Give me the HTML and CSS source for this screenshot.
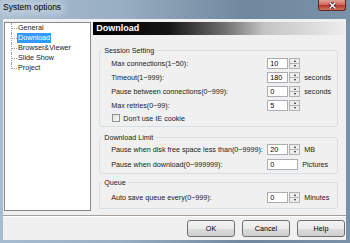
FILE: index.html
```html
<!DOCTYPE html>
<html lang="en">
<head>
    <meta charset="UTF-8">
    <title>System options</title>
    <link rel="stylesheet" href="styles.css">
</head>
<body>
    <div class="window">
        <div class="titlebar">
            <span class="title">System options</span>
            <span class="close">
                <svg width="9" height="7" viewBox="0 0 9 7">
                    <path d="M1.5 0.5 L7.5 6.5 M7.5 0.5 L1.5 6.5" stroke="#3b1410" stroke-width="3"/>
                    <path d="M1.5 0.5 L7.5 6.5 M7.5 0.5 L1.5 6.5" stroke="#fff" stroke-width="1.5"/>
                </svg>
            </span>
        </div>

        <div class="client">
            <div class="main">
                <!-- Options tree -->
                <ul class="tree">
                    <li><span class="branch"></span><span class="node">General</span></li>
                    <li><span class="branch"></span><span class="node selected">Download</span></li>
                    <li><span class="branch"></span><span class="node">Browser&amp;Viewer</span></li>
                    <li><span class="branch"></span><span class="node">Slide Show</span></li>
                    <li><span class="branch"></span><span class="node">Project</span></li>
                </ul>

                <div class="panel">
                    <div class="page-title">Download</div>

                    <fieldset class="group session">
                        <legend>Session Setting</legend>
                        <div class="row">
                            <label>Max connections(1~50):</label>
                            <input class="num" type="text" value="10">
                            <span class="spin"><span class="up"></span><span class="down"></span></span>
                        </div>
                        <div class="row">
                            <label>Timeout(1~999):</label>
                            <input class="num" type="text" value="180">
                            <span class="spin"><span class="up"></span><span class="down"></span></span>
                            <span class="unit">seconds</span>
                        </div>
                        <div class="row">
                            <label>Pause between connections(0~999):</label>
                            <input class="num" type="text" value="0">
                            <span class="spin"><span class="up"></span><span class="down"></span></span>
                            <span class="unit">seconds</span>
                        </div>
                        <div class="row">
                            <label>Max retries(0~99):</label>
                            <input class="num" type="text" value="5">
                            <span class="spin"><span class="up"></span><span class="down"></span></span>
                        </div>
                        <div class="check-row">
                            <span class="checkbox"></span>Don't use IE cookie
                        </div>
                    </fieldset>

                    <fieldset class="group limit">
                        <legend>Download Limit</legend>
                        <div class="row">
                            <label>Pause when disk free space less than(0~9999):</label>
                            <input class="num" type="text" value="20">
                            <span class="spin"><span class="up"></span><span class="down"></span></span>
                            <span class="unit">MB</span>
                        </div>
                        <div class="row">
                            <label>Pause when download(0~999999):</label>
                            <input class="num wide" type="text" value="0">
                            <span class="unit">Pictures</span>
                        </div>
                    </fieldset>

                    <fieldset class="group queue">
                        <legend>Queue</legend>
                        <div class="row">
                            <label>Auto save queue every(0~999):</label>
                            <input class="num" type="text" value="0">
                            <span class="spin"><span class="up"></span><span class="down"></span></span>
                            <span class="unit">Minutes</span>
                        </div>
                    </fieldset>
                </div>
            </div>

            <div class="separator"></div>

            <div class="buttons">
                <button class="btn">OK</button>
                <button class="btn">Cancel</button>
                <button class="btn">Help</button>
            </div>
        </div>
    </div>
</body>
</html>
```

FILE: styles.css
```css
body {
    margin: 0;
    width: 350px;
    height: 243px;
    overflow: hidden;
    font-family: "Liberation Sans", Arial, sans-serif;
    font-size: 7.2px;
    color: #1a1a1a;
}
.window {
    height: 243px;
    display: flex;
    flex-direction: column;
    background: linear-gradient(to right, #a8bccf 0%, #98aec2 35%, #6f889d 70%, #7a92a7 100%);
}
.titlebar {
    height: 19px;
    display: flex;
    align-items: flex-start;
    padding: 0 4px 0 1px;
}
.title {
    font-size: 8.5px;
    line-height: 11px;
    margin-top: 2px;
    padding: 0 2px;
    color: #000;
    border-radius: 6px;
    background: rgba(220, 230, 239, 0.35);
    box-shadow: 0 0 6px 3px rgba(220, 230, 239, 0.35);
}
.close {
    margin-left: auto;
    width: 28px;
    height: 11px;
    box-sizing: border-box;
    border: 1px solid #5d2a24;
    border-top: none;
    border-radius: 0 0 3px 3px;
    background: linear-gradient(#e3a297 0%, #cf6a5c 45%, #b73a2c 55%, #d0735e 100%);
    display: flex;
    align-items: center;
    justify-content: center;
}
.close svg {
    display: block;
}
.client {
    flex: 1;
    margin: 0 4px 3px 3px;
    background: #f0f0f0;
    display: flex;
    flex-direction: column;
}
.main {
    display: flex;
    padding: 3px 1px 0 1px;
}

/* tree */
.tree {
    width: 92px;
    height: 189px;
    box-sizing: border-box;
    margin: 0;
    padding: 0;
    list-style: none;
    background: #fff;
    border: 1px solid #828790;
}
.tree li {
    display: flex;
    align-items: flex-start;
    height: 10px;
    margin-left: 6px;
    border-left: 1px dotted #a0a0a0;
}
.tree li:last-child {
    border-left-color: transparent;
}
.branch {
    width: 5px;
    height: 5px;
    flex: none;
    border-bottom: 1px dotted #a0a0a0;
}
.tree li:last-child .branch {
    margin-left: -1px;
    border-left: 1px dotted #a0a0a0;
}
.node {
    line-height: 10px;
    padding: 0 1px;
}
.node.selected {
    background: #3399ff;
    color: #fff;
}

/* right side */
.panel {
    flex: 1;
    margin-left: 2px;
    display: flex;
    flex-direction: column;
}
.page-title {
    height: 13px;
    line-height: 13px;
    padding-left: 3px;
    font-size: 9px;
    font-weight: bold;
    color: #fff;
    background: linear-gradient(to right, #000 0%, #151515 30%, #6e6e6e 52%, #c4c4c4 68%, #ececec 100%);
}
.group {
    margin: 0 7px 0 6px;
    padding: 3px 6px 3px 11px;
    border: 1px solid #d5dfe5;
    border-radius: 3px;
    min-width: 0;
}
.group legend {
    line-height: 9px;
    padding: 0 2px;
    margin-left: -9px;
}
.session {
    margin-top: 11px;
}
.limit {
    margin-top: 6px;
    padding-top: 2px;
}
.limit .row + .row {
    margin-top: 4px;
}
.queue {
    margin-top: 4px;
    padding-top: 5px;
    padding-bottom: 5px;
}
.row {
    display: flex;
    align-items: center;
    height: 11px;
    white-space: nowrap;
}
.row + .row {
    margin-top: 3px;
}
.row label {
    width: 156px;
    flex: none;
}
.num {
    width: 21px;
    height: 11px;
    box-sizing: border-box;
    margin: 0;
    padding: 0 2px;
    border: 1px solid #abadb3;
    background: #fff;
    font: inherit;
    color: #000;
}
.num.wide {
    width: 31px;
}
.spin {
    width: 11px;
    height: 11px;
    box-sizing: border-box;
    margin-left: 1px;
    display: flex;
    flex-direction: column;
    border: 1px solid #b3b3b3;
    background: #ededed;
}
.spin span {
    flex: 1;
    display: flex;
    align-items: center;
    justify-content: center;
}
.spin .up {
    border-bottom: 1px solid #b3b3b3;
}
.spin .up::after {
    content: "";
    border-left: 1.5px solid transparent;
    border-right: 1.5px solid transparent;
    border-bottom: 2px solid #222;
}
.spin .down::after {
    content: "";
    border-left: 1.5px solid transparent;
    border-right: 1.5px solid transparent;
    border-top: 2px solid #222;
}
.unit {
    margin-left: 4px;
}
.check-row {
    display: flex;
    align-items: center;
    height: 10px;
    margin-top: 2px;
}
.checkbox {
    width: 8px;
    height: 8px;
    box-sizing: border-box;
    margin: 0 3px 0 1px;
    border: 1px solid #8e8f8f;
    background: linear-gradient(135deg, #dcdcdc, #fbfbfb);
}

/* bottom */
.separator {
    margin-top: 4px;
    border-top: 1px solid #a0a0a0;
    border-bottom: 1px solid #fff;
}
.buttons {
    display: flex;
    justify-content: flex-end;
    gap: 7px;
    padding: 3px 1px 0 0;
}
.btn {
    width: 48px;
    height: 17px;
    margin: 0;
    padding: 0;
    border: 1px solid #707070;
    border-radius: 3px;
    background: linear-gradient(#f2f2f2 0%, #ebebeb 50%, #dddddd 50%, #cfcfcf 100%);
    font: inherit;
    color: #000;
}
```
